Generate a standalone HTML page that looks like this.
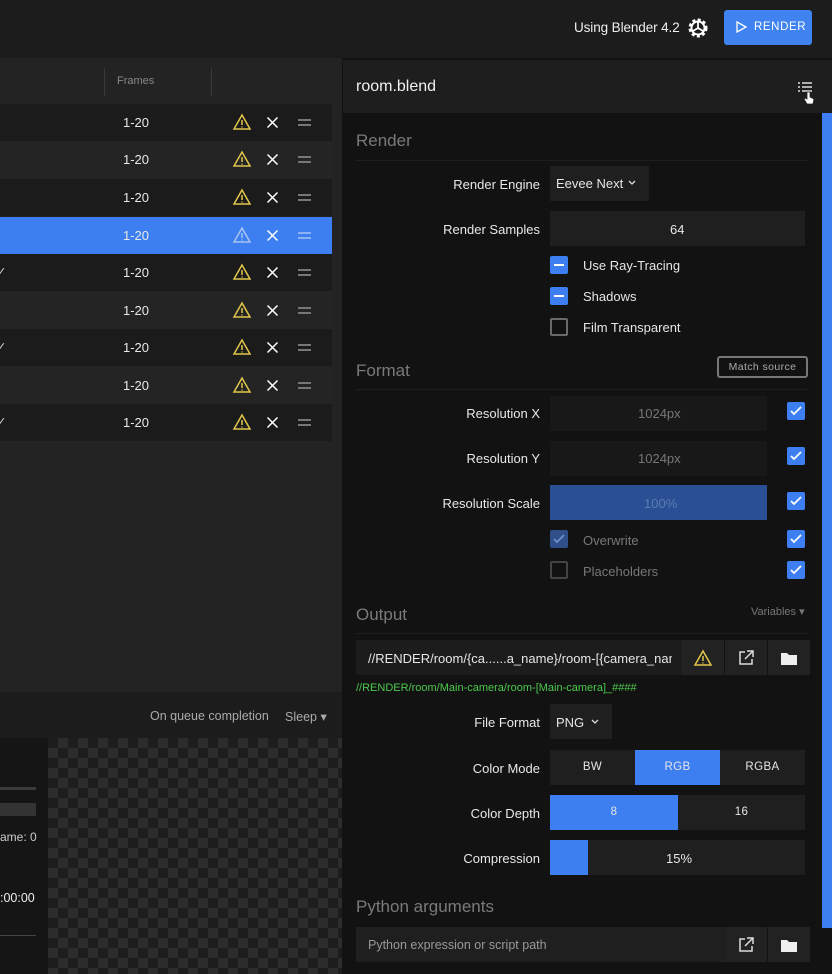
<!DOCTYPE html>
<html><head><style>
*{box-sizing:border-box;margin:0;padding:0}
body{width:832px;height:974px;background:#1a1a1a;font-family:"Liberation Sans",sans-serif;color:#e6e6e6;position:relative;overflow:hidden;font-size:13px}
.a{position:absolute}
.row{position:absolute;left:0;width:332px;height:36px}
.fr{position:absolute;left:123px;top:11px;font-size:13px;color:#e8e8e8}
.lbl{position:absolute;text-align:right;width:200px;left:340px;font-size:13px;color:#e8e8e8}
.field{position:absolute;background:#1f1f1f}
.cb{position:absolute;width:18px;height:18px;border-radius:2px;background:#3d7ff0}
.cbo{position:absolute;width:18px;height:18px;border-radius:2px;border:2px solid #6a6a6a}
.sec{position:absolute;left:356px;font-size:17px;color:#7a7a7a}
.hr{position:absolute;left:356px;width:452px;height:1px;background:#1e1e1e}
.seg{position:absolute;height:35px;line-height:35px;text-align:center;font-size:11.5px;letter-spacing:.4px}
</style></head><body>
<div class="a" style="left:0;top:0;width:832px;height:58px;background:#1c1c1c"></div>
<div class="a" style="left:574px;top:20px;font-size:13.5px;color:#eee;letter-spacing:-.1px">Using Blender 4.2</div>
<svg class="a" style="left:686px;top:16px" width="24" height="24" viewBox="0 0 24 24"><circle cx="12" cy="12" r="8" fill="none" stroke="#fff" stroke-width="3" stroke-dasharray="3 2.3"/><circle cx="12" cy="12" r="6.5" fill="none" stroke="#fff" stroke-width="2"/><path d="M12 12L12 6M12 12L7 15M12 12L17 15" stroke="#fff" stroke-width="1.8"/></svg>
<div class="a" style="left:724px;top:10px;width:88px;height:35px;background:#4083f0;border-radius:3px;color:#fff;font-size:11.5px;letter-spacing:.6px;line-height:35px;padding-left:30px">RENDER</div>
<svg class="a" style="left:734px;top:20px" width="14" height="14" viewBox="0 0 14 14"><path d="M3 2L12 7L3 12Z" fill="none" stroke="#fff" stroke-width="1.3"/></svg>
<div class="a" style="left:0;top:58px;width:342px;height:634px;background:#232323"></div>
<div class="a" style="left:104px;top:68px;width:1px;height:28px;background:#3a3a3a"></div>
<div class="a" style="left:211px;top:68px;width:1px;height:28px;background:#3a3a3a"></div>
<div class="a" style="left:117px;top:75px;font-size:11px;color:#888">Frames</div>
<div id="rows"></div>
<div class="a" style="left:0;top:692px;width:342px;height:46px;background:#1c1c1c"></div>
<div class="a" style="left:150px;top:709px;font-size:12.5px;color:#aaa">On queue completion</div>
<div class="a" style="left:285px;top:709px;font-size:12.5px;color:#aaa">Sleep ▾</div>
<div class="a" style="left:0;top:738px;width:48px;height:236px;background:#151515"></div>
<div class="a" style="left:0;top:787px;width:36px;height:3px;background:#3a3a3a"></div>
<div class="a" style="left:0;top:803px;width:36px;height:13px;background:#333"></div>
<div class="a" style="left:0;top:830px;font-size:12px;color:#ccc">ame: 0</div>
<div class="a" style="left:0;top:891px;font-size:12.5px;color:#eee">:00:00</div>
<div class="a" style="left:0;top:935px;width:36px;height:1px;background:#444"></div>
<div class="a" style="left:48px;top:738px;width:294px;height:236px;background-color:#1d1d1d;background-image:linear-gradient(45deg,#2c2c2c 25%,transparent 25%,transparent 75%,#2c2c2c 75%),linear-gradient(45deg,#2c2c2c 25%,transparent 25%,transparent 75%,#2c2c2c 75%);background-size:20px 20px;background-position:0 0,10px 10px"></div>
<div class="a" style="left:342px;top:58px;width:490px;height:916px;background:#121212"></div>
<div class="a" style="left:343px;top:60px;width:489px;height:53px;background:#1e1e1e"></div>
<div class="a" style="left:356px;top:78px;font-size:16px;color:#f0f0f0">room.blend</div>
<svg class="a" style="left:797px;top:80px" width="18" height="26" viewBox="0 0 18 26"><g stroke="#ddd" stroke-width="1.5"><path d="M1 3h2M5 3h10M1 7h2M5 7h10M1 11h2M5 11h10"/></g><path d="M10 12v7l-2-1-1 1 3 5h6l1-5-4-2v-5z" fill="#fff" stroke="#222" stroke-width=".8"/></svg>
<div class="a" style="left:822px;top:113px;width:10px;height:815px;background:#3d7ff0"></div>
<div class="sec" style="top:131px">Render</div>
<div class="hr" style="top:160px"></div>
<div class="lbl" style="top:177px">Render Engine</div>
<div class="field" style="left:550px;top:166px;width:99px;height:35px"></div>
<div class="a" style="left:556px;top:176px;font-size:13px">Eevee Next</div>
<svg class="a" style="left:627px;top:179px" width="10" height="8"><path d="M2 2l3 3 3-3" stroke="#ddd" fill="none" stroke-width="1.3"/></svg>
<div class="lbl" style="top:222px">Render Samples</div>
<div class="field" style="left:550px;top:211px;width:255px;height:35px"></div>
<div class="a" style="left:670px;top:222px;font-size:13px">64</div>
<div class="cb" style="left:550px;top:256px"></div><div class="a" style="left:554px;top:264px;width:10px;height:2px;background:#fff"></div>
<div class="a" style="left:583px;top:258px;font-size:13px">Use Ray-Tracing</div>
<div class="cb" style="left:550px;top:287px"></div><div class="a" style="left:554px;top:295px;width:10px;height:2px;background:#fff"></div>
<div class="a" style="left:583px;top:289px;font-size:13px">Shadows</div>
<div class="cbo" style="left:550px;top:318px"></div>
<div class="a" style="left:583px;top:320px;font-size:13px">Film Transparent</div>
<div class="sec" style="top:361px">Format</div>
<div class="a" style="left:717px;top:356px;width:91px;height:22px;border:2px solid #777;border-radius:3px;font-size:10.5px;color:#aaa;text-align:center;line-height:18px;letter-spacing:.4px">Match source</div>
<div class="hr" style="top:389px"></div>
<div class="lbl" style="top:406px">Resolution X</div>
<div class="field" style="left:550px;top:396px;width:217px;height:35px;background:#181818"></div>
<div class="a" style="left:638px;top:406px;color:#777">1024px</div>
<div class="lbl" style="top:451px">Resolution Y</div>
<div class="field" style="left:550px;top:441px;width:217px;height:35px;background:#181818"></div>
<div class="a" style="left:638px;top:451px;color:#777">1024px</div>
<div class="lbl" style="top:496px">Resolution Scale</div>
<div class="field" style="left:550px;top:485px;width:217px;height:35px;background:#2a4f94"></div>
<div class="a" style="left:644px;top:496px;color:#5c7bb3">100%</div>
<div class="cb" style="left:550px;top:530px;background:#2e4f8a"></div><svg class="a" style="left:552px;top:533px" width="14" height="12"><path d="M2 6l3 3 7-7" stroke="#6f8fc8" stroke-width="1.8" fill="none"/></svg>
<div class="a" style="left:583px;top:533px;color:#777">Overwrite</div>
<div class="cbo" style="left:550px;top:561px;border-color:#444"></div>
<div class="a" style="left:583px;top:564px;color:#777">Placeholders</div>
<div id="rcb"></div>
<div class="sec" style="top:605px">Output</div>
<div class="a" style="left:751px;top:605px;font-size:11px;color:#777">Variables ▾</div>
<div class="hr" style="top:633px"></div>
<div class="field" style="left:356px;top:640px;width:326px;height:35px;background:#1c1c1c"></div>
<div class="a" style="left:368px;top:651px;width:304px;overflow:hidden;white-space:nowrap;font-size:13px">//RENDER/room/{ca......a_name}/room-[{camera_name}]</div>
<div class="field" style="left:682px;top:640px;width:42px;height:35px;background:#222"></div>
<div class="field" style="left:725px;top:640px;width:42px;height:35px;background:#222"></div>
<div class="field" style="left:768px;top:640px;width:42px;height:35px;background:#222"></div>
<svg class="a" style="left:693px;top:649px" width="20" height="18"><path d="M10 2L18 16H2Z" fill="none" stroke="#e2c64a" stroke-width="1.5"/><path d="M10 7v5M10 13.5v1" stroke="#e2c64a" stroke-width="1.5"/></svg>
<svg class="a" style="left:737px;top:649px" width="18" height="18"><path d="M8 3H3v12h12v-5M10 2h6v6M16 2L8 10" fill="none" stroke="#ddd" stroke-width="1.5"/></svg>
<svg class="a" style="left:780px;top:650px" width="18" height="16"><path d="M1 3h6l2 2h8v10H1z" fill="#eee"/></svg>
<div class="a" style="left:356px;top:682px;font-size:11px;color:#4cc94c">//RENDER/room/Main-camera/room-[Main-camera]_####</div>
<div class="lbl" style="top:715px">File Format</div>
<div class="field" style="left:550px;top:704px;width:62px;height:35px"></div>
<div class="a" style="left:556px;top:715px">PNG</div>
<svg class="a" style="left:590px;top:718px" width="10" height="8"><path d="M2 2l3 3 3-3" stroke="#ddd" fill="none" stroke-width="1.3"/></svg>
<div class="lbl" style="top:761px">Color Mode</div>
<div class="field seg" style="left:550px;top:750px;width:85px">BW</div>
<div class="field seg" style="left:635px;top:750px;width:85px;background:#3d7ff0">RGB</div>
<div class="field seg" style="left:720px;top:750px;width:85px">RGBA</div>
<div class="lbl" style="top:806px">Color Depth</div>
<div class="field seg" style="left:550px;top:795px;width:128px;background:#3d7ff0">8</div>
<div class="field seg" style="left:678px;top:795px;width:127px">16</div>
<div class="lbl" style="top:851px">Compression</div>
<div class="field" style="left:550px;top:840px;width:255px;height:35px"></div>
<div class="field" style="left:550px;top:840px;width:38px;height:35px;background:#3d7ff0"></div>
<div class="a" style="left:666px;top:851px">15%</div>
<div class="sec" style="top:897px">Python arguments</div>
<div class="field" style="left:356px;top:927px;width:369px;height:35px;background:#1f1f1f"></div>
<div class="a" style="left:368px;top:938px;font-size:12.5px;color:#999">Python expression or script path</div>
<div class="field" style="left:725px;top:927px;width:42px;height:35px;background:#222"></div>
<div class="field" style="left:768px;top:927px;width:42px;height:35px;background:#222"></div>
<svg class="a" style="left:737px;top:936px" width="18" height="18"><path d="M8 3H3v12h12v-5M10 2h6v6M16 2L8 10" fill="none" stroke="#ddd" stroke-width="1.5"/></svg>
<svg class="a" style="left:780px;top:937px" width="18" height="16"><path d="M1 3h6l2 2h8v10H1z" fill="#eee"/></svg>
<script>
var h='',tops=[104,141,179,217,254,292,329,367,404],chk=[0,0,0,0,1,0,1,0,1];
tops.forEach(function(t,i){var sel=i==3,bg=sel?'#3d7ff0':(i%2?'#242424':'#1b1b1b');
h+='<div class="row" style="top:'+t+'px;height:37px;background:'+bg+'">'+(chk[i]?'<div class="a" style="left:-3px;top:11px;color:#ddd;font-size:11px">✓</div>':'')+'<div class="fr">1-20</div>'+
'<svg class="a" style="left:232px;top:9px" width="20" height="18"><path d="M10 2L18 16H2Z" fill="none" stroke="'+(sel?'#a9c4f0':'#e2c64a')+'" stroke-width="1.5"/><path d="M10 7v5M10 13.5v1" stroke="'+(sel?'#a9c4f0':'#e2c64a')+'" stroke-width="1.5"/></svg>'+
'<svg class="a" style="left:266px;top:12px" width="13" height="13"><path d="M1.5 1.5l10 10M11.5 1.5l-10 10" stroke="#fff" stroke-width="1.5"/></svg>'+
'<div class="a" style="left:298px;top:15px;width:13px;height:2px;background:'+(sel?'#8cb2f5':'#777')+'"></div><div class="a" style="left:298px;top:20px;width:13px;height:2px;background:'+(sel?'#8cb2f5':'#777')+'"></div></div>';});
document.getElementById('rows').innerHTML=h;
var r='';[402,447,492,530,561].forEach(function(t){r+='<div class="cb" style="left:787px;top:'+t+'px"></div><svg class="a" style="left:789px;top:'+(t+3)+'px" width="14" height="12"><path d="M2 6l3 3 7-7" stroke="#fff" stroke-width="1.8" fill="none"/></svg>';});
document.getElementById('rcb').innerHTML=r;
</script>
</body></html>
